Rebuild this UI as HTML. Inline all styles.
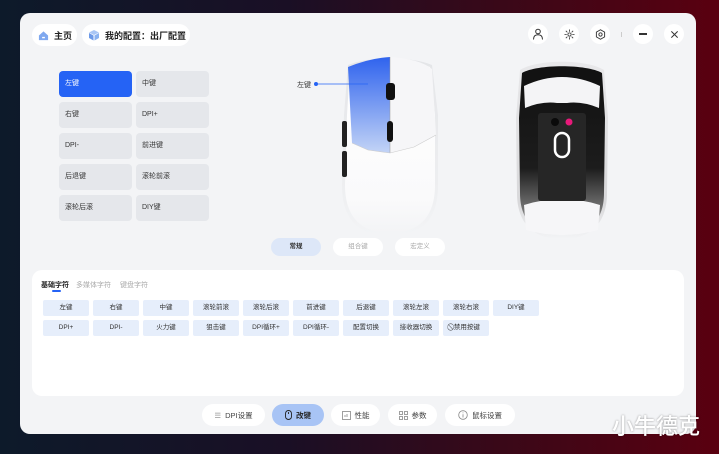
<!DOCTYPE html>
<html><head><meta charset="utf-8"><style>
*{margin:0;padding:0;box-sizing:border-box}
body{width:719px;height:454px;overflow:hidden;background:linear-gradient(90deg,#0d1a2a 0%,#1a0f25 40%,#3a0818 70%,#5a0010 100%);font-family:"Liberation Sans","Noto Sans CJK SC",sans-serif;position:relative}
.panel{position:absolute;left:20px;top:13px;width:676px;height:421px;background:#f3f4f6;border-radius:10px}
.a{position:absolute}
.pill{position:absolute;background:#fff;border-radius:12px;font-size:9px;font-weight:bold;color:#222;display:flex;align-items:center;gap:5px;padding-left:6px}
.k{position:absolute;width:73px;height:26px;background:#e5e7eb;border-radius:4px;font-size:7px;color:#333;padding-left:6px;line-height:26px}
.k.on{background:#2563f5;color:#fff}
.b{position:absolute;width:46px;height:16px;background:#e6eefb;border-radius:2px;font-size:6.5px;color:#333;text-align:center;line-height:16px}
.t{position:absolute;top:238px;width:50px;height:18px;border-radius:9px;background:#fff;font-size:6.5px;color:#aaa;text-align:center;line-height:18px}
.n{position:absolute;top:404px;height:22px;border-radius:11px;background:#fff;font-size:7.5px;color:#444;display:flex;align-items:center;justify-content:center;gap:4px}
.ic{position:absolute;top:24px;width:20px;height:20px;border-radius:10px;background:#fff;display:flex;align-items:center;justify-content:center}
</style></head><body>
<div class="panel"></div>
<div class="pill" style="left:32px;top:24px;width:45px;height:22px"><svg width="11" height="11" viewBox="0 0 12 12"><path d="M1 6L6 1.5 11 6V11H1Z" fill="#7fa8ef"/><rect x="4.5" y="7.5" width="3" height="1.5" fill="#fff"/></svg>主页</div>
<div class="pill" style="left:82px;top:24px;width:108px;height:22px"><svg width="12" height="12" viewBox="0 0 12 12"><path d="M6 1L11 3.5 6 6 1 3.5Z" fill="#a9c6f5"/><path d="M1 4V9L5.5 11.5V6.5Z" fill="#6d9ae8"/><path d="M11 4V9L6.5 11.5V6.5Z" fill="#8ab2f0"/></svg>我的配置：出厂配置</div>
<div class="ic" style="left:528px"><svg width="12" height="12" viewBox="0 0 12 12" fill="none" stroke="#333" stroke-width="1"><circle cx="6" cy="3.5" r="2.3"/><path d="M1.5 11.5C1.5 8 3.5 6.8 6 6.8S10.5 8 10.5 11.5"/></svg></div>
<div class="ic" style="left:559px"><svg width="11" height="11" viewBox="0 0 12 12" stroke="#333" stroke-width=".9"><circle cx="6" cy="6" r="1.8" fill="none"/><path d="M6 0.5V3M6 9V11.5M0.5 6H3M9 6H11.5M2 2L3.7 3.7M8.3 8.3L10 10M10 2L8.3 3.7M3.7 8.3L2 10"/></svg></div>
<div class="ic" style="left:590px"><svg width="11" height="11" viewBox="0 0 12 12" fill="none" stroke="#333" stroke-width="1"><path d="M6 .8L10.5 3.4V8.6L6 11.2 1.5 8.6V3.4Z"/><circle cx="6" cy="6" r="1.8"/></svg></div>
<div class="a" style="left:621px;top:32px;width:1px;height:5px;background:#ccc"></div>
<div class="ic" style="left:633px"><div style="width:8px;height:1.2px;background:#333"></div></div>
<div class="ic" style="left:664px"><svg width="9" height="9" viewBox="0 0 10 10" stroke="#333" stroke-width="1.1"><path d="M1.5 1.5L8.5 8.5M8.5 1.5L1.5 8.5"/></svg></div>

<div class="k on" style="left:59px;top:71px">左键</div><div class="k" style="left:136px;top:71px">中键</div>
<div class="k" style="left:59px;top:102px">右键</div><div class="k" style="left:136px;top:102px">DPI+</div>
<div class="k" style="left:59px;top:133px">DPI-</div><div class="k" style="left:136px;top:133px">前进键</div>
<div class="k" style="left:59px;top:164px">后退键</div><div class="k" style="left:136px;top:164px">滚轮前滚</div>
<div class="k" style="left:59px;top:195px">滚轮后滚</div><div class="k" style="left:136px;top:195px">DIY键</div>

<svg class="a" style="left:290px;top:55px" width="160" height="182" viewBox="0 0 160 182">
<defs><linearGradient id="bl" x1="0" y1="0" x2="0" y2="1"><stop offset="0" stop-color="#2f63ee"/><stop offset="1" stop-color="#c3d4f6"/></linearGradient>
<linearGradient id="wh" x1="0" y1="0" x2="0" y2="1"><stop offset="0" stop-color="#e4e5e8"/><stop offset=".75" stop-color="#eeeff1"/><stop offset="1" stop-color="#f3f4f6"/></linearGradient>
<linearGradient id="wi" x1="0" y1="0" x2="0" y2="1"><stop offset="0" stop-color="#fff"/><stop offset=".8" stop-color="#fafafb"/><stop offset="1" stop-color="#f3f4f6"/></linearGradient></defs>
<path d="M58 10C80 1 120 1 142 10L148 60 148 130C148 166 130 181 100 181S52 166 52 130L54 60Z" fill="url(#wh)"/>
<path d="M60 12C80 4 120 4 140 12L145 60 145 130C145 163 128 178 100 178S55 163 55 130L57 60Z" fill="url(#wi)"/>
<path d="M58 12Q80 3 100 2V98L78 95 62 88Z" fill="url(#bl)"/>
<path d="M100 2Q130 4 142 14L146 80 124 92 100 98Z" fill="#f6f6f8"/>
<line x1="100" y1="2" x2="100" y2="98" stroke="#999" stroke-width=".5"/>
<path d="M62 88L78 95 100 98 124 92 146 80" fill="none" stroke="#ccc" stroke-width=".6"/>
<rect x="96" y="28" width="9" height="17" rx="3" fill="#111"/><rect x="97" y="66" width="6" height="21" rx="3" fill="#111"/>
<rect x="52" y="66" width="5" height="26" rx="2" fill="#222"/><rect x="52" y="96" width="5" height="26" rx="2" fill="#222"/>
<line x1="26" y1="29" x2="78" y2="29" stroke="#2563f5" stroke-width=".8"/><circle cx="26" cy="29" r="2" fill="#2563f5"/>
<text x="7" y="32" font-size="7" fill="#333" font-family="Liberation Sans,Noto Sans CJK SC,sans-serif">左键</text>
</svg>
<svg class="a" style="left:512px;top:58px" width="100" height="182" viewBox="0 0 100 182">
<defs><linearGradient id="bk" x1="0" y1="0" x2="0" y2="1"><stop offset="0" stop-color="#111"/><stop offset=".6" stop-color="#1c1c1c"/><stop offset=".85" stop-color="#777"/><stop offset="1" stop-color="#f3f4f6"/></linearGradient>
<linearGradient id="sh" x1="0" y1="0" x2="0" y2="1"><stop offset="0" stop-color="#e8e8ea"/><stop offset=".8" stop-color="#d8d8da"/><stop offset="1" stop-color="#f3f4f6"/></linearGradient></defs>
<path d="M8 12C25 1 75 1 92 12L96 60 95 135C95 168 76 181 50 181S5 168 5 135L4 60Z" fill="url(#sh)"/>
<path d="M10 15C25 6 75 6 90 15L93 60 92 135C92 165 74 178 50 178S8 165 8 135L7 60Z" fill="url(#bk)"/>
<path d="M12 28Q50 10 88 28L87 50Q70 43 55 45H45Q30 43 13 50Z" fill="#f4f4f6"/>
<path d="M12 147Q50 135 88 147L86 172Q50 182 14 172Z" fill="#f6f6f8"/>
<rect x="26" y="55" width="48" height="88" rx="3" fill="#262626"/>
<circle cx="43" cy="64" r="4" fill="#0a0a0a"/><circle cx="57" cy="64" r="3.5" fill="#e8197a"/>
<rect x="43" y="75" width="14" height="24" rx="7" fill="none" stroke="#fff" stroke-width="2.5"/>
</svg>

<div class="t" style="left:271px;background:#dde7f8;color:#333;font-weight:bold">常规</div>
<div class="t" style="left:333px">组合键</div>
<div class="t" style="left:395px">宏定义</div>

<div class="a" style="left:32px;top:270px;width:652px;height:126px;background:#fff;border-radius:10px"></div>
<div class="a" style="left:41px;top:280px;font-size:7px;font-weight:bold;color:#222">基础字符</div>
<div class="a" style="left:52px;top:290px;width:9px;height:2px;border-radius:1px;background:#2563f5"></div>
<div class="a" style="left:76px;top:280px;font-size:7px;color:#aaa">多媒体字符</div>
<div class="a" style="left:120px;top:280px;font-size:7px;color:#aaa">键盘字符</div>

<div class="b" style="left:43px;top:300px">左键</div><div class="b" style="left:93px;top:300px">右键</div><div class="b" style="left:143px;top:300px">中键</div><div class="b" style="left:193px;top:300px">滚轮前滚</div><div class="b" style="left:243px;top:300px">滚轮后滚</div><div class="b" style="left:293px;top:300px">前进键</div><div class="b" style="left:343px;top:300px">后退键</div><div class="b" style="left:393px;top:300px">滚轮左滚</div><div class="b" style="left:443px;top:300px">滚轮右滚</div><div class="b" style="left:493px;top:300px">DIY键</div>
<div class="b" style="left:43px;top:320px">DPI+</div><div class="b" style="left:93px;top:320px">DPI-</div><div class="b" style="left:143px;top:320px">火力键</div><div class="b" style="left:193px;top:320px">狙击键</div><div class="b" style="left:243px;top:320px">DPI循环+</div><div class="b" style="left:293px;top:320px">DPI循环-</div><div class="b" style="left:343px;top:320px">配置切换</div><div class="b" style="left:393px;top:320px">接收器切换</div><div class="b" style="left:443px;top:320px">⃠ 禁用按键</div>

<div class="n" style="left:202px;width:63px"><span style="color:#999">☰</span>DPI设置</div>
<div class="n" style="left:272px;width:52px;background:#a8c4f5;color:#222;font-weight:bold"><svg width="7" height="10" viewBox="0 0 7 10" fill="none" stroke="#222" stroke-width=".9"><rect x=".5" y=".5" width="6" height="9" rx="3"/><line x1="3.5" y1="2" x2="3.5" y2="4"/></svg>改键</div>
<div class="n" style="left:331px;width:49px"><svg width="9" height="9" viewBox="0 0 9 9" fill="none" stroke="#888" stroke-width=".8"><rect x=".5" y=".5" width="8" height="8"/><path d="M3 6V4M5 6V3"/></svg>性能</div>
<div class="n" style="left:388px;width:49px"><svg width="9" height="9" viewBox="0 0 9 9" fill="none" stroke="#888" stroke-width=".8"><rect x=".5" y=".5" width="3" height="3"/><rect x="5.5" y=".5" width="3" height="3"/><rect x=".5" y="5.5" width="3" height="3"/><rect x="5.5" y="5.5" width="3" height="3"/></svg>参数</div>
<div class="n" style="left:445px;width:70px"><svg width="10" height="10" viewBox="0 0 10 10" fill="none" stroke="#888" stroke-width=".8"><circle cx="5" cy="5" r="4.3"/><path d="M5 4.3V7.5M5 2.5V3.3"/></svg>鼠标设置</div>

<div class="a" style="left:612px;top:411px;font-size:22px;line-height:28px;color:#fff;font-family:'Noto Sans CJK SC',sans-serif;font-weight:500;z-index:5;text-shadow:0 0 2px rgba(0,0,0,.4)">小牛德克</div>
</body></html>
